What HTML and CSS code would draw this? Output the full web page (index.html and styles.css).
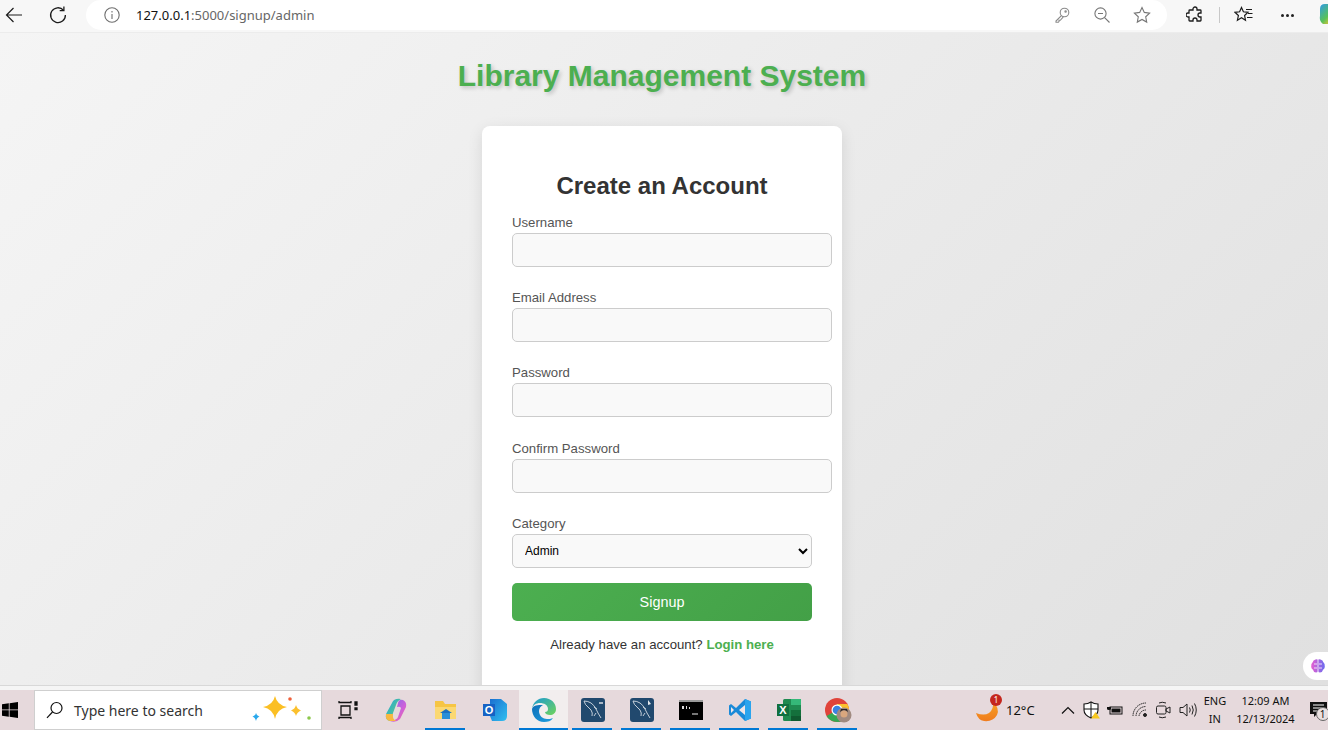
FILE: index.html
```html
<!DOCTYPE html>
<html lang="en">
<head>
  <meta charset="UTF-8">
  <title>Signup</title>
  <link rel="stylesheet" href="styles.css">
</head>
<body>

  <!-- browser toolbar -->
  <div class="toolbar">
    <div class="nav-btn back">
      <svg width="20" height="20" viewBox="0 0 20 20" fill="none" stroke="#1c1c1c" stroke-width="1.2"><path d="M18 10H2.5M9.5 3l-7 7 7 7"/></svg>
    </div>
    <div class="nav-btn reload">
      <svg width="20" height="20" viewBox="0 0 20 20" fill="none" stroke="#1c1c1c" stroke-width="1.3"><path d="M15.5 5.2A7.4 7.4 0 1 0 17.4 10"/><path d="M15.9 1.5v4.2h-4.2"/></svg>
    </div>
    <div class="address">
      <svg class="info" width="18" height="18" viewBox="0 0 18 18" fill="none" stroke="#6e6e6e" stroke-width="1.1"><circle cx="9" cy="9" r="7.2"/><path d="M9 8v5M9 5v1.4"/></svg>
      <span class="url"><b>127.0.0.1</b>:5000/signup/admin</span>
      <div class="addr-icons">
        <svg width="18" height="18" viewBox="0 0 18 18" fill="none" stroke="#8a8a8a" stroke-width="1.1"><circle cx="11.5" cy="6.5" r="4.3"/><path d="M8.4 9.6 3 15v1.2h2.400l.6-.6v-1.300h1.300l3-3.400"/><circle cx="12.600" cy="5.400" r=".7"/></svg>
        <svg width="18" height="18" viewBox="0 0 18 18" fill="none" stroke="#777" stroke-width="1.1"><circle cx="7.5" cy="7.5" r="5.6"/><path d="M5 7.5h5M11.6 11.6 16.5 16.500"/></svg>
        <svg width="18" height="18" viewBox="0 0 18 18" fill="none" stroke="#777" stroke-width="1.1"><path d="m9 1.500 2.300 4.900 5.300.7-3.900 3.700 1 5.300L9 13.500l-4.700 2.600 1-5.300-3.900-3.700 5.300-.7z"/></svg>
      </div>
    </div>
    <div class="tool-icons">
      <svg class="puzzle" width="18" height="18" viewBox="0 0 18 18" fill="none" stroke="#1c1c1c" stroke-width="1.3"><path d="M7 3a2 2 0 0 1 4 0v1h3.200a.8.8 0 0 1 .8.8V7h-1a2 2 0 0 0 0 4h1v3.200a.8.8 0 0 1-.8.8H11v-1a2 2 0 0 0-4 0v1H3.800a.8.8 0 0 1-.8-.8V11H2a2 2 0 0 1 0-4h1V4.800a.8.8 0 0 1 .8-.8H7z"/></svg>
      <span class="divider"></span>
      <svg class="favs" width="20" height="18" viewBox="0 0 20 18" fill="none" stroke="#1c1c1c" stroke-width="1.2"><path d="m7.500 1.500 1.900 4.300 4.600.5-3.400 3.200.9 4.700-4-2.400-4.100 2.400 1-4.700L1 6.300l4.600-.5z"/><path d="M12 3.500h6M14 7.500h4.500M13 11.500h5.500"/></svg>
      <span class="dots"><i></i><i></i><i></i></span>
      <svg class="copilot" width="24" height="24" viewBox="0 0 24 24"><defs><linearGradient id="cp" x1="0" y1="0" x2="1" y2="1"><stop offset="0" stop-color="#2f9be8"/><stop offset=".5" stop-color="#58c15a"/><stop offset=".8" stop-color="#f5c430"/><stop offset="1" stop-color="#f0503a"/></linearGradient></defs><path d="M3 6q0-5 5-5h9q5 2 5 8v5q-2 7-8 7H6q-4-3-3-8z" fill="url(#cp)"/></svg>
    </div>
  </div>

  <!-- page -->
  <div class="page">
    <h1 class="site-title">Library Management System</h1>
    <div class="card">
      <h2>Create an Account</h2>
      <form>
        <div class="field">
          <label for="username">Username</label>
          <input id="username" type="text">
        </div>
        <div class="field">
          <label for="email">Email Address</label>
          <input id="email" type="email">
        </div>
        <div class="field field-wide">
          <label for="password">Password</label>
          <input id="password" type="password">
        </div>
        <div class="field">
          <label for="confirm">Confirm Password</label>
          <input id="confirm" type="password">
        </div>
        <div class="field-select">
          <label for="category">Category</label>
          <select id="category">
            <option>Admin</option>
          </select>
        </div>
        <button type="button" class="signup-btn">Signup</button>
      </form>
      <p class="login-line">Already have an account? <a href="#">Login here</a></p>
    </div>
    <div class="float-pill">
      <svg width="16" height="16" viewBox="0 0 16 16"><defs><linearGradient id="br" x1="0" y1="0" x2="1" y2="0"><stop offset="0" stop-color="#e85fd0"/><stop offset="1" stop-color="#6a6cf0"/></linearGradient></defs><path d="M5.500 1.500Q7 1 8 2q1-1 2.500-.5Q13 2 13.200 4 15.500 6 14.800 9q-.3 2-1.800 2.800-.5 2.700-3 2.700-1.200 0-2-1-.8 1-2 1-2.500 0-3-2.700Q1.500 11 1.200 9 .5 6 2.800 4 3 2 5.500 1.500z" fill="url(#br)"/><path d="M8 2v12M4 6h3M9 6h3M4 10h3M9 10h3" stroke="#fff" stroke-width=".8" fill="none"/></svg>
    </div>
  </div>
  <div class="strip"></div>

  <!-- windows taskbar -->
  <div class="taskbar">
    <div class="start">
      <svg width="16" height="16" viewBox="0 0 16 16" fill="#000"><path d="M0 2.300 6.800 1.300V7.500H0zM7.600 1.200 16 0v7.500H7.600zM0 8.300h6.800v6.400L0 13.700zM7.600 8.300H16V16l-8.400-1.200z"/></svg>
    </div>
    <div class="search">
      <svg width="18" height="18" viewBox="0 0 18 18" fill="none" stroke="#111" stroke-width="1.2"><circle cx="10.500" cy="7" r="5.500"/><path d="M6.500 11 1 16.800"/></svg>
      <span>Type here to search</span>
      <svg class="sparkle" width="62" height="30" viewBox="0 0 62 30"><path d="M25 1q2 9 12 11-10 2-12 12-2-10-12-12 10-2 12-11z" fill="#fbbf24"/><path d="M46 10q1 4 5 5.500-4 1.500-5 5.500-1-4-5-5.500 4-1.500 5-5.500z" fill="#fbc02d"/><path d="M6 18q.6 3 3.500 3.800Q6.600 22.600 6 26q-.6-3.400-3.500-4.200Q5.400 21 6 18z" fill="#29a8ec"/><circle cx="40" cy="4" r="1.800" fill="#f0603a"/><circle cx="59" cy="23" r="1.800" fill="#8cc84b"/></svg>
    </div>
    <div class="apps">
      <div class="app">
        <svg width="20" height="20" viewBox="0 0 20 20" fill="none" stroke="#111" stroke-width="1.300"><path d="M1 1v1.500h12V1M3 6h9v9H3zM1 19v-1.500h12V19"/><path d="M17 2h2v3h-2zM17 8h2v1.500h-2z" fill="#111"/></svg>
      </div>
      <div class="app">
        <svg width="26" height="26" viewBox="0 0 26 26"><defs><linearGradient id="co1" x1="0" y1="0" x2="1" y2="1"><stop offset="0" stop-color="#1fa8e0"/><stop offset="1" stop-color="#6fd06a"/></linearGradient><linearGradient id="co2" x1="0" y1="0" x2="1" y2="1"><stop offset="0" stop-color="#7a6cf0"/><stop offset=".6" stop-color="#d060d8"/><stop offset="1" stop-color="#f0708a"/></linearGradient></defs><path d="M17 2q-7-1-9 4L2 17q-1 6 4 7h5q-4-2-2-8l3-8q1-4 5-6z" fill="url(#co1)"/><path d="M6 24q6 2 10-2l6-12q1-5-3-7-4-1-5 3l-1 4q3-1 4 1l-3 9q-1 3-8 4z" fill="url(#co2)"/><path d="M2 17q-1 6 4 7h6q-4-2-3-7z" fill="#f8b840"/></svg>
      </div>
      <div class="app on">
        <svg width="24" height="22" viewBox="0 0 24 22"><path d="M1 2h8l2 3h11v15H1z" fill="#f6c544"/><path d="M1 8h21v12H1z" fill="#fbd872"/><path d="M8 13h8v7H8z" fill="#2a8fd8"/><path d="M6 14l6-4 6 4z" fill="#1c70c0"/></svg>
      </div>
      <div class="app">
        <svg width="26" height="24" viewBox="0 0 26 24"><defs><linearGradient id="ol" x1="0" y1="0" x2="1" y2="1"><stop offset="0" stop-color="#1a6fd0"/><stop offset="1" stop-color="#30c0f0"/></linearGradient></defs><path d="M8 1h11l6 5v12q0 5-5 5H10l-2-5z" fill="url(#ol)"/><path d="M1 6h12v12H1z" fill="#1662c4"/><text class="ol-letter" x="7" y="16" text-anchor="middle">O</text></svg>
      </div>
      <div class="app active on">
        <svg width="26" height="26" viewBox="0 0 26 26"><defs><linearGradient id="ed1" x1="0" y1="0" x2="1" y2="1"><stop offset="0" stop-color="#1a9ad6"/><stop offset="1" stop-color="#6fd45a"/></linearGradient><linearGradient id="ed2" x1="0" y1="0" x2="1" y2="1"><stop offset="0" stop-color="#0c6fb8"/><stop offset="1" stop-color="#1f9fe0"/></linearGradient></defs><path d="M1 12C2 5 7 1 13 1c7 0 12 5 12 11 0 4-3 6-6 6-2.500 0-5-1-5-3 2 0 3-1 3-3 0-4-4-6-8-6-4 0-7 2-8 6z" fill="url(#ed1)"/><path d="M1 12c0 7 5 13 12 13 4 0 7-1 9-4-2 1-4 1-6 1-4 0-8-3-8-8 0-3 2-5 4-6-5 0-10 0-11 4z" fill="url(#ed2)"/></svg>
      </div>
      <div class="app on">
        <svg class="mysql" width="24" height="24" viewBox="0 0 24 24"><rect width="24" height="24" rx="3" fill="#21496e"/><path d="M3 3q4 0 7 2t5 6l2 4 3 5M3 3q1 4 4 6l3 3q2 3 1 6M13 9l3 2M15 15l-2 3" fill="none" stroke="#d5dde4" stroke-width=".9"/><path d="M18 5h4" stroke="#e4e9ee" stroke-width="1.400"/></svg>
      </div>
      <div class="app on">
        <svg class="mysql" width="24" height="24" viewBox="0 0 24 24"><rect width="24" height="24" rx="3" fill="#21496e"/><path d="M3 3q4 0 7 2t5 6l2 4 3 5M3 3q1 4 4 6l3 3q2 3 1 6M13 9l3 2M15 15l-2 3" fill="none" stroke="#d5dde4" stroke-width=".9"/><path d="M18 2l3 4-3 1z" fill="#e4e9ee"/></svg>
      </div>
      <div class="app on">
        <svg width="24" height="20" viewBox="0 0 24 20"><rect width="24" height="20" fill="#000"/><rect width="24" height="2" fill="#9a9a9a"/><path d="M3 6h2v3H3zM7 6h1v3H7zM10 7h1v2h-1z" fill="#ddd"/><path d="M13 14h6" stroke="#eee"/></svg>
      </div>
      <div class="app on">
        <svg width="24" height="24" viewBox="0 0 24 24"><path d="M17 1 8 10 3 6 1 7.500v9L3 18l5-4 9 9 6-2.500V3.500z" fill="#1a8ad8"/><path d="M17 7v10l-6-5z" fill="#f0e6e8"/><path d="M17 1l6 2.500v17L17 23z" fill="#2aa4ee"/><path d="M3 9v6l3-3z" fill="#f0e6e8"/></svg>
      </div>
      <div class="app on">
        <svg width="26" height="24" viewBox="0 0 26 24"><rect x="7" y="1" width="18" height="22" rx="1.500" fill="#1f8a50"/><rect x="15" y="1" width="10" height="6" fill="#35b878"/><rect x="15" y="12" width="10" height="6" fill="#14703c"/><rect x="15" y="18" width="10" height="5" fill="#0f5a30"/><rect x="1" y="6" width="12" height="12" fill="#107040"/><text class="xl-letter" x="7" y="16" text-anchor="middle">X</text></svg>
      </div>
      <div class="app on">
        <svg width="28" height="26" viewBox="0 0 28 26"><circle cx="13" cy="13" r="12" fill="#e0433a"/><path d="M13 13 2.600 19A12 12 0 0 0 19 23.400z" fill="#34a853"/><path d="M13 7h10.400A12 12 0 0 1 19 23.400L13 13z" fill="#fbc02d"/><circle cx="13" cy="13" r="5.500" fill="#fff"/><circle cx="13" cy="13" r="4.300" fill="#3b82e0"/><circle cx="20" cy="18" r="7.500" fill="#a08a80"/><circle cx="20" cy="17" r="3.500" fill="#d9a77e"/><path d="M16 15q4-4 8 0l-1-3h-6z" fill="#2b2320"/></svg>
      </div>
    </div>
    <div class="tray">
      <div class="weather">
        <svg width="26" height="26" viewBox="0 0 26 26"><defs><linearGradient id="mo" x1="0" y1="0" x2="0" y2="1"><stop offset="0" stop-color="#f6a224"/><stop offset="1" stop-color="#f07c1e"/></linearGradient></defs><path d="M18 5q7 6 4 13-4 7-13 6-6-1-8-8 8 3 13 0 5-4 4-11z" fill="url(#mo)"/></svg>
        <span class="badge">1</span>
      </div>
      <span class="temp">12°C</span>
      <svg class="tray-i chev" width="14" height="8" viewBox="0 0 14 8" fill="none" stroke="#111" stroke-width="1.200"><path d="M1 7.500 7 1.500l6 6"/></svg>
      <svg class="tray-i shield" width="18" height="18" viewBox="0 0 18 18"><path d="M8 1q3 2 7 2v6q0 5-7 8-7-3-7-8V3q4 0 7-2z" fill="#fff" stroke="#111" stroke-width="1.100"/><path d="M8 1v16M1 8h14" stroke="#111" stroke-width="1"/><path d="M12.500 11l4.500 6.500H8z" fill="#f8c81e"/></svg>
      <svg class="tray-i batt" width="16" height="12" viewBox="0 0 16 12"><path d="M1 0v3M3 0v3M0 3h4v2q0 1-2 1t-2-1z" fill="#111"/><rect x="3" y="3" width="12" height="7" fill="none" stroke="#111"/><rect x="4.500" y="4.500" width="9" height="4" fill="#111"/></svg>
      <svg class="tray-i wifi" width="16" height="16" viewBox="0 0 16 16" fill="none" stroke="#222" stroke-width="1"><path d="M1 14A13 13 0 0 1 14 1" stroke-dasharray="1.500 .6"/><path d="M4 14A10 10 0 0 1 14 4.500" stroke-dasharray="1.500 .6"/><path d="M7 14A7 7 0 0 1 14 8" stroke-dasharray="1.500 .6"/><circle cx="13" cy="13" r="1.500" fill="#222"/></svg>
      <svg class="tray-i cam" width="16" height="18" viewBox="0 0 16 18" fill="none" stroke="#222" stroke-width="1"><path d="M4 2q3-1.500 7 0M4 16q3 1.500 7 0"/><rect x="1.500" y="5" width="9.500" height="8" rx="1.500"/><path d="M11 8l4-2v6l-4-2z"/></svg>
      <svg class="tray-i vol" width="18" height="16" viewBox="0 0 18 16" fill="none" stroke="#222" stroke-width="1"><path d="M1 5.500h3L8 2v12l-4-3.500H1z"/><path d="M10.500 5.500q1.500 2.500 0 5M13 3.500q2.500 4.500 0 9M15.500 1.500q3.500 6.500 0 13"/></svg>
      <div class="lang"><span>ENG</span><span>IN</span></div>
      <div class="clock"><span>12:09 AM</span><span>12/13/2024</span></div>
      <div class="notify">
        <svg width="17" height="16" viewBox="0 0 17 16"><path d="M0 0h17v12H7l-3 3v-3H0z" fill="#111"/><path d="M3 3h11M3 6h11M3 9h7" stroke="#fff"/></svg>
        <span class="notify-num">1</span>
      </div>
    </div>
  </div>

</body>
</html>
```

FILE: styles.css
```css
* {
  box-sizing: border-box;
}
html, body {
  margin: 0;
  height: 730px;
  overflow: hidden;
}
body {
  display: flex;
  flex-direction: column;
  font-family: "Liberation Sans", Arial, sans-serif;
}

/* browser toolbar */
.toolbar {
  height: 33px;
  flex: none;
  display: flex;
  background: #f7f7f7;
  border-bottom: 1px solid #ececec;
  overflow: hidden;
}
.nav-btn {
  width: 44px;
  height: 30px;
  flex: none;
  display: flex;
  align-items: center;
  justify-content: center;
}
.back {
  width: 28px;
  margin-right: 8px;
}
.address {
  width: 1081px;
  height: 30px;
  flex: none;
  margin-left: 6px;
  background: #fff;
  border-radius: 15px;
  display: flex;
  align-items: center;
  padding-left: 17px;
}
.url {
  margin-left: 15px;
  font-family: "Noto Sans", sans-serif;
  font-size: 13px;
  color: #666;
}
.url b {
  font-weight: 400;
  color: #111;
}
.addr-icons {
  margin-left: auto;
  margin-right: 16px;
  display: flex;
  gap: 22px;
}
.tool-icons {
  flex: 1;
  height: 30px;
  display: flex;
  align-items: center;
  padding-left: 19px;
}
.divider {
  width: 1px;
  height: 16px;
  background: #c8c8c8;
  margin: 0 14px 0 15px;
}
.favs {
  flex: none;
}
.dots {
  display: flex;
  gap: 2px;
  margin-left: 27px;
}
.dots i {
  width: 3px;
  height: 3px;
  border-radius: 50%;
  background: #222;
}
.copilot {
  flex: none;
  margin-left: 23px;
}

/* page */
.page {
  height: 653px;
  flex: none;
  position: relative;
  overflow: hidden;
  padding-right: 4px;
  background: linear-gradient(135deg, #f5f5f5, #e0e0e0);
  border-bottom: 1px solid #d8d8d8;
}
.site-title {
  margin: 25px 0 33px;
  text-align: center;
  font-size: 30px;
  line-height: 35px;
  color: #4caf50;
  text-shadow: 2px 2px 4px rgba(0, 0, 0, 0.2);
}
.card {
  width: 360px;
  height: 600px;
  margin: 0 auto;
  padding: 30px;
  background: #fff;
  border-radius: 8px;
  box-shadow: 0 4px 15px rgba(0, 0, 0, 0.1);
}
.card h2 {
  margin: 16px 0 14px;
  text-align: center;
  font-size: 24px;
  line-height: 28px;
  color: #333;
}
.card label {
  display: block;
  font-size: 13.2px;
  line-height: 17px;
  margin-bottom: 2px;
  color: #555;
}
.field {
  width: 320px;
  margin-bottom: 22px;
}
.field-wide {
  margin-bottom: 23px;
}
.field input {
  display: block;
  width: 100%;
  height: 34px;
  background: #f9f9f9;
  border: 1px solid #ccc;
  border-radius: 5px;
}
.field-select {
  margin-bottom: 15px;
}
.field-select select {
  display: block;
  width: 100%;
  height: 34px;
  padding: 0 8px;
  font-family: "Liberation Sans", Arial, sans-serif;
  font-size: 12px;
  color: #000;
  background: #f9f9f9;
  border: 1px solid #ccc;
  border-radius: 5px;
}
.signup-btn {
  display: block;
  width: 100%;
  height: 38px;
  border: none;
  border-radius: 5px;
  color: #fff;
  font-family: "Liberation Sans", Arial, sans-serif;
  font-size: 14.4px;
  background: linear-gradient(135deg, #4caf50, #43a047);
}
.login-line {
  margin: 16px 0 0;
  text-align: center;
  font-size: 13.2px;
  line-height: 16px;
  color: #333;
}
.login-line a {
  color: #4caf50;
  font-weight: bold;
  text-decoration: none;
}
.float-pill {
  position: absolute;
  right: 0;
  top: 619px;
  width: 25px;
  height: 28px;
  background: #fff;
  border-radius: 14px 0 0 14px;
  display: flex;
  align-items: center;
  padding-left: 7px;
}
.strip {
  height: 4px;
  flex: none;
  background: #f5f5f5;
}

/* taskbar */
.taskbar {
  height: 40px;
  flex: none;
  display: flex;
  align-items: center;
  background: #e6d9dc;
  font-family: "Noto Sans", sans-serif;
  color: #111;
}
.start {
  width: 34px;
  flex: none;
  padding-left: 2px;
  display: flex;
}
.search {
  width: 288px;
  height: 40px;
  flex: none;
  background: #fff;
  border: 1px solid #cfcfcf;
  display: flex;
  align-items: center;
  padding-left: 11px;
  font-size: 14px;
  color: #333;
}
.search span {
  margin-left: 10px;
}
.sparkle {
  margin-left: 47px;
}
.apps {
  display: flex;
  flex: none;
  margin-left: 1px;
}
.app {
  position: relative;
  width: 49px;
  height: 40px;
  display: flex;
  align-items: center;
  justify-content: center;
}
.app.on::after {
  content: "";
  position: absolute;
  left: 4px;
  right: 5px;
  bottom: 0;
  height: 2px;
  background: #0078d4;
}
.app.active {
  background: #f2eeee;
}
.app.active::after {
  left: 0;
  right: 0;
}
.ol-letter, .xl-letter {
  font-family: "Liberation Sans", sans-serif;
  font-weight: bold;
  font-size: 11px;
  fill: #fff;
}
.tray {
  flex: 1;
  display: flex;
  align-items: center;
  padding-left: 113px;
  overflow: hidden;
}
.weather {
  position: relative;
  width: 26px;
  height: 26px;
  flex: none;
}
.badge {
  position: absolute;
  top: -3px;
  right: -1px;
  width: 12px;
  height: 12px;
  border-radius: 50%;
  background: #c4261d;
  color: #fff;
  font-size: 8px;
  line-height: 12px;
  text-align: center;
}
.temp {
  margin-left: 5px;
  font-size: 13px;
}
.tray-i {
  flex: none;
}
.chev {
  margin-left: 26px;
}
.shield {
  margin-left: 8px;
}
.batt {
  margin-left: 6px;
}
.wifi {
  margin-left: 9px;
}
.cam {
  margin-left: 7px;
}
.vol {
  margin-left: 8px;
}
.lang, .clock {
  display: flex;
  flex-direction: column;
  align-items: center;
  flex: none;
  font-size: 11px;
  line-height: 18px;
}
.lang {
  margin-left: 7px;
}
.clock {
  margin-left: 10px;
}
.notify {
  position: relative;
  margin-left: 15px;
  flex: none;
  display: flex;
}
.notify-num {
  position: absolute;
  left: 6px;
  top: 5px;
  width: 14px;
  height: 14px;
  border-radius: 50%;
  background: #e8e0e0;
  border: 1px solid #666;
  font-size: 10px;
  line-height: 12px;
  text-align: center;
}
```
